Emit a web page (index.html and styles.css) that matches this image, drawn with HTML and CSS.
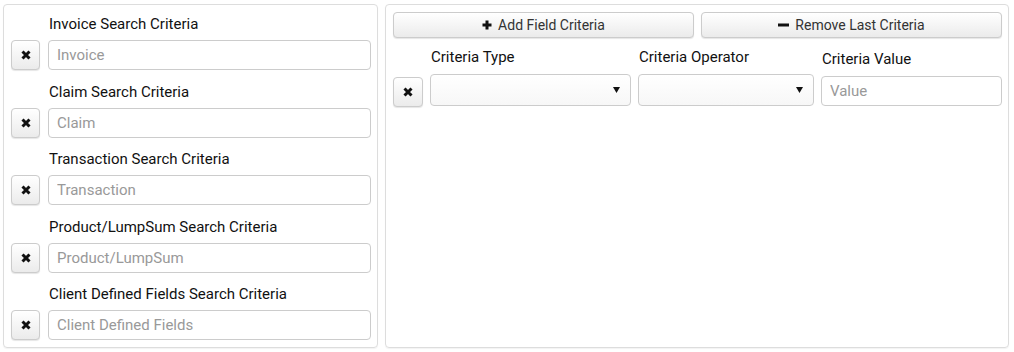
FILE: index.html
```html
<!DOCTYPE html>
<html lang="en">
<head>
  <meta charset="UTF-8" />
  <title>Search Criteria</title>
  <link rel="stylesheet" href="styles.css">
</head>
<body>
  <div class="layout">
    <div class="panel panel-fixed">
      <div class="group">
        <label>Invoice Search Criteria</label>
        <div class="row">
          <button class="btn btn-x" type="button"><svg width="10" height="10" viewBox="0 0 10 10"><path d="M1.5 1.5 L8.5 8.5 M8.5 1.5 L1.5 8.5" /></svg></button>
          <input type="text" placeholder="Invoice">
        </div>
      </div>
      <div class="group">
        <label>Claim Search Criteria</label>
        <div class="row">
          <button class="btn btn-x" type="button"><svg width="10" height="10" viewBox="0 0 10 10"><path d="M1.5 1.5 L8.5 8.5 M8.5 1.5 L1.5 8.5" /></svg></button>
          <input type="text" placeholder="Claim">
        </div>
      </div>
      <div class="group">
        <label>Transaction Search Criteria</label>
        <div class="row">
          <button class="btn btn-x" type="button"><svg width="10" height="10" viewBox="0 0 10 10"><path d="M1.5 1.5 L8.5 8.5 M8.5 1.5 L1.5 8.5" /></svg></button>
          <input type="text" placeholder="Transaction">
        </div>
      </div>
      <div class="group">
        <label>Product/LumpSum Search Criteria</label>
        <div class="row">
          <button class="btn btn-x" type="button"><svg width="10" height="10" viewBox="0 0 10 10"><path d="M1.5 1.5 L8.5 8.5 M8.5 1.5 L1.5 8.5" /></svg></button>
          <input type="text" placeholder="Product/LumpSum">
        </div>
      </div>
      <div class="group">
        <label>Client Defined Fields Search Criteria</label>
        <div class="row">
          <button class="btn btn-x" type="button"><svg width="10" height="10" viewBox="0 0 10 10"><path d="M1.5 1.5 L8.5 8.5 M8.5 1.5 L1.5 8.5" /></svg></button>
          <input type="text" placeholder="Client Defined Fields">
        </div>
      </div>
    </div>

    <div class="panel panel-custom">
      <div class="toolbar">
        <button class="btn btn-wide" type="button"><svg width="10" height="10" viewBox="0 0 10 10"><path d="M5 0.5 V9.5 M0.5 5 H9.5" /></svg>Add Field Criteria</button>
        <button class="btn btn-wide" type="button"><svg width="11" height="10" viewBox="0 0 11 10"><path d="M0 5 H11" /></svg>Remove Last Criteria</button>
      </div>
      <div class="criteria">
        <button class="btn btn-x" type="button"><svg width="10" height="10" viewBox="0 0 10 10"><path d="M1.5 1.5 L8.5 8.5 M8.5 1.5 L1.5 8.5" /></svg></button>
        <div class="col col-type">
          <label>Criteria Type</label>
          <div class="select-wrap">
            <select><option></option></select>
            <svg class="arrow" width="7" height="6" viewBox="0 0 7 6"><path d="M0 0 H7 L3.5 6 Z" /></svg>
          </div>
        </div>
        <div class="col col-op">
          <label>Criteria Operator</label>
          <div class="select-wrap">
            <select><option></option></select>
            <svg class="arrow" width="7" height="6" viewBox="0 0 7 6"><path d="M0 0 H7 L3.5 6 Z" /></svg>
          </div>
        </div>
        <div class="col col-value">
          <label>Criteria Value</label>
          <input type="text" placeholder="Value">
        </div>
      </div>
    </div>
  </div>
</body>
</html>
```

FILE: styles.css
```css
body {
  margin: 0;
  padding: 4px 5px 4px 3px;
  font-family: Roboto, 'Liberation Sans', sans-serif;
  font-size: 15px;
  color: #222;
  background-color: #fff;
}

.layout {
  display: flex;
  gap: 7px;
}

.panel {
  border: 1px solid #ddd;
  border-radius: 4px;
  box-shadow: 0 1px 1px rgba(0, 0, 0, 0.05);
}

.panel-fixed {
  flex-shrink: 0;
  width: 360px;
  height: 333px;
  padding: 9px 6px 0 7px;
}

.panel-custom {
  flex: 1;
  height: 335px;
  padding: 7px 6px 0 7px;
}

label {
  display: block;
  font-weight: 400;
  line-height: 20px;
  color: #111;
}

.group {
  margin-bottom: 11.5px;
}

.group label {
  margin-left: 38px;
  margin-bottom: 6px;
}

.row {
  display: flex;
  align-items: center;
  gap: 8px;
}

input,
select {
  box-sizing: border-box;
  height: 30px;
  border: 1px solid #ccc;
  border-radius: 4px;
  padding: 0 8px;
  font-family: inherit;
  font-size: 15px;
  color: #333;
  background-color: #fff;
}

input::placeholder {
  color: #999;
}

.row input {
  flex: 1;
  min-width: 0;
}

.btn {
  display: inline-flex;
  align-items: center;
  justify-content: center;
  box-sizing: border-box;
  border: 1px solid #ccc;
  border-radius: 4px;
  background-image: linear-gradient(to bottom, #fff 0, #ebebeb 100%);
  box-shadow: 0 1px 1px rgba(0, 0, 0, 0.1);
  font-family: inherit;
  font-size: 14px;
  color: #333;
  padding: 0;
  cursor: pointer;
}

.btn svg path {
  fill: none;
  stroke: #111;
  stroke-width: 3;
}

.btn-x {
  width: 29px;
  height: 30px;
  flex-shrink: 0;
}

.toolbar {
  display: flex;
  gap: 7px;
}

.btn-wide {
  flex: 1;
  height: 26px;
  gap: 6px;
}

.criteria {
  display: grid;
  grid-template-columns: 30px 201px 176px 1fr;
  column-gap: 7px;
  align-items: end;
  margin-top: 9px;
}

.criteria .btn-x {
  width: 30px;
  margin-bottom: -1px;
}

.col label {
  margin-left: 1px;
  margin-bottom: 7px;
}

.select-wrap {
  position: relative;
}

select {
  display: block;
  width: 100%;
  height: 32px;
  appearance: none;
  background-image: linear-gradient(to bottom, #fff 0, #f7f7f7 100%);
}

.arrow {
  position: absolute;
  right: 11px;
  top: 13px;
  pointer-events: none;
}

.arrow path {
  fill: #111;
}

.col-value input {
  display: block;
  width: 100%;
}
```
